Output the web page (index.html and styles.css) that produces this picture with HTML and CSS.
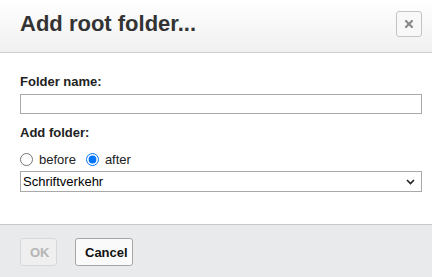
FILE: index.html
```html
<!DOCTYPE html>
<html lang="en">
<head>
  <meta charset="UTF-8">
  <title>Add root folder</title>
  <link rel="stylesheet" href="styles.css">
</head>
<body>
  <div class="dialog">
    <div class="dialog-header">
      <h3>Add root folder...</h3>
      <button class="close-btn" type="button" aria-label="Close">
        <svg width="8" height="8" viewBox="0 0 8 8"><path d="M1 1L7 7M7 1L1 7" stroke="#8a8a8a" stroke-width="2.2" stroke-linecap="square"/></svg>
      </button>
    </div>
    <div class="dialog-body">
      <label class="field-label" for="folderName">Folder name:</label>
      <input type="text" id="folderName" class="text-input">
      <label class="field-label second">Add folder:</label>
      <div class="radio-row">
        <input type="radio" id="before" name="pos">
        <label for="before">before</label>
        <input type="radio" id="after" name="pos" checked>
        <label for="after">after</label>
      </div>
      <div class="select-wrap">
        <select class="folder-select">
          <option>Schriftverkehr</option>
        </select>
        <svg class="select-arrow" width="9" height="6" viewBox="0 0 9 6"><path d="M1 1L4.5 4.5L8 1" fill="none" stroke="#222" stroke-width="1.6"/></svg>
      </div>
    </div>
    <div class="dialog-footer">
      <button class="btn btn-ok" disabled>OK</button>
      <button class="btn btn-cancel">Cancel</button>
    </div>
  </div>
</body>
</html>
```
FILE: styles.css
```css
body {
  margin: 0;
  font-family: "Liberation Sans", Arial, sans-serif;
  font-size: 13px;
  color: #222;
  background-color: #fff;
}
.dialog {
  width: 432px;
  height: 277px;
  display: flex;
  flex-direction: column;
}
.dialog-header {
  height: 48px;
  padding: 0 10px 4px 20px;
  display: flex;
  justify-content: space-between;
  align-items: center;
  border-bottom: 1px solid #cfcfcf;
  background: linear-gradient(#ffffff, #f0f0f0);
}
.dialog-header h3 {
  margin: 0;
  font-size: 22px;
  font-weight: bold;
  color: #333;
}
.close-btn {
  width: 26px;
  height: 26px;
  padding: 0;
  border: 1px solid #c4c4c4;
  border-radius: 3px;
  background-color: #f8f8f8;
  display: flex;
  align-items: center;
  justify-content: center;
}
.dialog-body {
  padding: 21px 10px 32px 20px;
  display: flex;
  flex-direction: column;
  align-items: flex-start;
}
.field-label {
  font-weight: bold;
  line-height: 15px;
  margin-bottom: 5px;
}
.field-label.second {
  margin-top: 11px;
  margin-bottom: 0;
}
.text-input {
  box-sizing: border-box;
  width: 402px;
  height: 20px;
  margin: 0;
  border: 1px solid #a9a9a9;
  font-family: inherit;
  font-size: 13px;
}
.radio-row {
  margin-top: 12px;
  height: 15px;
  display: flex;
  align-items: center;
}
.radio-row input {
  margin: 0 6px 0 0;
  width: 13px;
  height: 13px;
}
.radio-row label {
  line-height: 15px;
  margin-right: 10px;
}
.select-wrap {
  position: relative;
  margin-top: 4px;
  width: 402px;
  height: 21px;
}
.folder-select {
  box-sizing: border-box;
  appearance: none;
  -webkit-appearance: none;
  width: 100%;
  height: 21px;
  margin: 0;
  padding: 0 0 0 2px;
  border: 1px solid #a9a9a9;
  border-radius: 0;
  background-color: #fff;
  color: #000;
  font-family: inherit;
  font-size: 13px;
}
.select-arrow {
  position: absolute;
  right: 7px;
  top: 8px;
  pointer-events: none;
}
.dialog-footer {
  flex: 1;
  padding: 13px 20px 0;
  display: flex;
  gap: 18px;
  align-items: flex-start;
  border-top: 1px solid #c8c8c8;
  background-color: #e9eaec;
}
.btn {
  height: 28px;
  padding: 0 9px;
  border-radius: 3px;
  font-family: inherit;
  font-size: 13px;
  font-weight: bold;
}
.btn-ok {
  width: 37px;
  border: 1px solid #d8d8d8;
  background-color: #efefef;
  color: #b5b5b5;
}
.btn-cancel {
  width: 58px;
  border: 1px solid #a6a6a6;
  background-color: #fafafa;
  color: #111;
}
```
